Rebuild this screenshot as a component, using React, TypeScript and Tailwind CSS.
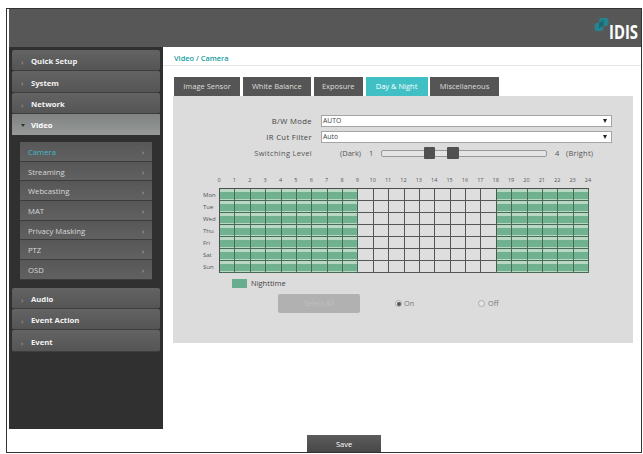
import { useState } from "react"

type Schedule = { start: number; end: number }[]

const topMenu = ["Quick Setup", "System", "Network"]
const bottomMenu = ["Audio", "Event Action", "Event"]
const videoMenu = ["Camera", "Streaming", "Webcasting", "MAT", "Privacy Masking", "PTZ", "OSD"]

const tabs = [
  { name: "Image Sensor", width: "w-[66px]" },
  { name: "White Balance", width: "w-[68.5px]" },
  { name: "Exposure", width: "w-[49.5px]" },
  { name: "Day & Night", width: "w-[62px]" },
  { name: "Miscellaneous", width: "w-[69px]" },
]

const days = ["Mon", "Tue", "Wed", "Thu", "Fri", "Sat", "Sun"]
const hours = Array.from({ length: 25 }, (_, i) => i)
const night: Schedule = [
  { start: 0, end: 9 },
  { start: 18, end: 24 },
]

const isNight = (hour: number) => night.some((n) => hour >= n.start && hour < n.end)

const Logo = () => (
  <div className="flex h-[24px] w-[47px] items-start">
    <svg width="15" height="15" viewBox="0 0 15 15" className="shrink-0">
      <path d="M5.5 1 H13 Q14.5 1 14.5 2.5 V7 Q14 9 12 9 H9.5 V11 Q9 14 7 14 H2 Q0.5 14 0.5 12 V8 Q1 6 3 6 H5 Z" fill="#26828d" />
      <path d="M5 6 L9.5 3 V9 L5 11 Z" fill="#1d6873" />
    </svg>
    <span className="mt-[6px] origin-left scale-x-[0.76] text-[19.5px] leading-[18px] font-bold text-white">IDIS</span>
  </div>
)

const MenuItem = ({ name }: { name: string }) => (
  <div className="flex h-[21.3px] items-center rounded-[2px] border-b border-[#3e3e3e] bg-linear-to-b from-[#636363] to-[#555555] pt-[4px] pl-[9px]">
    <span className="w-[10px] text-[8px] leading-none text-[#aaaaaa]">›</span>
    <span className="text-[7.7px] leading-none font-bold text-[#f2f2f2]">{name}</span>
  </div>
)

const Sidebar = () => (
  <nav className="h-[382px] w-[154px] shrink-0 bg-[#303030] px-[3px] pt-[3px]">
    {topMenu.map((name) => (
      <MenuItem key={name} name={name} />
    ))}
    <div className="flex h-[21px] items-center bg-linear-to-b from-[#7e8280] to-[#979a99] pt-[2px] pl-[9px]">
      <svg width="4" height="3" className="mr-[6px]">
        <path d="M0 0H4L2 3Z" fill="#333333" />
      </svg>
      <span className="text-[7.7px] leading-none font-bold text-white">Video</span>
    </div>
    <div className="h-[153px] px-[8px] pt-[7px]">
      {videoMenu.map((name) => (
        <div
          key={name}
          className="flex h-[19.7px] items-center justify-between border-b border-[#3c3c3c] bg-linear-to-b from-[#575757] to-[#616161] pt-[3px] pr-[8px] pl-[8px]"
        >
          <span className={`text-[7.7px] leading-none ${name === "Camera" ? "text-[#3fbac6]" : "text-[#d8d8d8]"}`}>
            {name}
          </span>
          <span className="text-[7px] leading-none text-[#bbbbbb]">›</span>
        </div>
      ))}
    </div>
    {bottomMenu.map((name) => (
      <MenuItem key={name} name={name} />
    ))}
  </nav>
)

const Select = ({ label, value }: { label: string; value: string }) => (
  <div className="flex h-[12px] items-center">
    <span className="w-[139px] pt-[2px] text-right text-[7.7px] leading-none tracking-[0.35px]">{label}</span>
    <div className="ml-[9px] flex h-[12px] w-[291px] items-center justify-between border border-[#a5a5a5] bg-white pr-[4px] pl-px">
      <span className="text-[6.8px] leading-none">{value}</span>
      <svg width="4" height="4">
        <path d="M0 0H4L2 4Z" fill="#222222" />
      </svg>
    </div>
  </div>
)

const SwitchingLevel = () => (
  <div className="flex h-[12px] items-center text-[7.5px] leading-none text-[#555555]">
    <span className="w-[139px] pt-[2px] text-right tracking-[0.3px]">Switching Level</span>
    <span className="ml-[28px] w-[29px] pt-[2px]">(Dark)</span>
    <span className="w-[12px] pt-[2px]">1</span>
    <div className="flex h-[7px] w-[166px] items-center rounded-[2px] border border-[#999999] bg-[#e4e4e4] pl-[42px]">
      <div className="h-[12px] w-[11px] rounded-[1px] bg-[#505050]" />
      <div className="ml-[12px] h-[12px] w-[12px] rounded-[1px] bg-[#505050]" />
    </div>
    <span className="ml-[8px] w-[11px] pt-[2px]">4</span>
    <span className="pt-[2px] tracking-[0.2px]">(Bright)</span>
  </div>
)

const ScheduleTable = () => (
  <div className="mt-[18px] ml-[28px]">
    <div className="ml-[10.3px] flex h-[11px] text-[5.5px] leading-[7px] text-[#555555]">
      {hours.map((hour) => (
        <span key={hour} className="w-[15.38px] shrink-0 text-center">
          {hour}
        </span>
      ))}
    </div>
    <div className="flex">
      <div className="w-[18px] pt-px text-[6px] leading-none text-[#555555]">
        {days.map((day) => (
          <div key={day} className="flex h-[12.07px] items-center pl-[2px]">
            {day}
          </div>
        ))}
      </div>
      <div className="w-[370px] border-t border-l border-[#4d4d4d]">
        {days.map((day) => (
          <div key={day} className="grid h-[12px] grid-cols-24">
            {hours.slice(0, 24).map((hour) => (
              <div
                key={hour}
                className={`border-r border-b pt-[3px] ${
                  isNight(hour) ? "border-[#476b57] bg-[#b9d8c3]" : "border-[#555555] bg-[#dedede]"
                }`}
              >
                {isNight(hour) && <div className="h-[7px] bg-[#70b190]" />}
              </div>
            ))}
          </div>
        ))}
      </div>
    </div>
  </div>
)

const DayNightPanel = () => {
  const [enabled, setEnabled] = useState(true)

  return (
    <div className="h-[247px] w-[460px] bg-[#dcdcdc] pt-[19px] text-[#444444]">
      <Select label="B/W Mode" value="AUTO" />
      <div className="h-[4px]" />
      <Select label="IR Cut Filter" value="Auto" />
      <div className="h-[4px]" />
      <SwitchingLevel />
      <ScheduleTable />
      <div className="mt-[6px] ml-[59px] flex h-[9px] items-center">
        <div className="h-[9px] w-[15px] bg-[#68ad90]" />
        <span className="ml-[4px] text-[7.5px] leading-none">Nighttime</span>
      </div>
      <div className="mt-[6px] flex h-[19px] items-center text-[7.3px] leading-none text-[#777777]">
        <div className="ml-[105px] flex h-[19px] w-[82px] items-center justify-center rounded-[2px] bg-[#b1b1b1] text-[#c0c0c0]">
          Select All
        </div>
        <button onClick={() => setEnabled(true)} className="ml-[35px] flex w-[83px] items-center gap-[2px]">
          <Radio checked={enabled} />
          On
        </button>
        <button onClick={() => setEnabled(false)} className="flex items-center gap-[3px]">
          <Radio checked={!enabled} />
          Off
        </button>
      </div>
    </div>
  )
}

const Radio = ({ checked }: { checked: boolean }) => (
  <span className="flex h-[7px] w-[7px] items-center justify-center rounded-full border border-[#aaaaaa] bg-[#e6e6e6]">
    {checked && <span className="h-[4px] w-[4px] rounded-full bg-[#555555]" />}
  </span>
)

const App = () => {
  const [active, setActive] = useState("Day & Night")

  return (
    <div className="h-[454px] w-[643px] overflow-hidden bg-white pt-[8px] pl-[6px] font-['Open_Sans','Noto_Sans',sans-serif]">
      <div className="h-[445px] w-[636px] border-[1.5px] border-[#333333] bg-white pl-[2px]">
        <header className="flex h-[38px] justify-end bg-[#575757] pt-[8px]">
          <Logo />
        </header>
        <div className="flex h-[405px]">
          <Sidebar />
          <main className="flex flex-1 flex-col">
            <h1 className="h-[19px] border-b border-[#e6e6e6] pt-[8px] pl-[11px] text-[7.4px] leading-none font-semibold text-[#159ca0]">
              Video / Camera
            </h1>
            <div className="mt-[11px] ml-[11px] flex h-[19px] gap-[2.5px]">
              {tabs.map((tab) => (
                <button
                  key={tab.name}
                  onClick={() => setActive(tab.name)}
                  className={`flex items-center justify-center pt-px text-[7.5px] leading-none whitespace-nowrap ${tab.width} ${
                    active === tab.name ? "bg-[#40c0c5] text-white" : "bg-[#555555] text-[#dddddd]"
                  }`}
                >
                  {tab.name}
                </button>
              ))}
            </div>
            <div className="ml-[10px]">
              <DayNightPanel />
            </div>
            <button className="mt-auto ml-[144px] flex h-[17px] w-[74px] items-center justify-center bg-linear-to-b from-[#5c5c5c] to-[#484848] pt-[2px] text-[7.5px] leading-none text-white">
              Save
            </button>
          </main>
        </div>
      </div>
    </div>
  )
}

export default App
